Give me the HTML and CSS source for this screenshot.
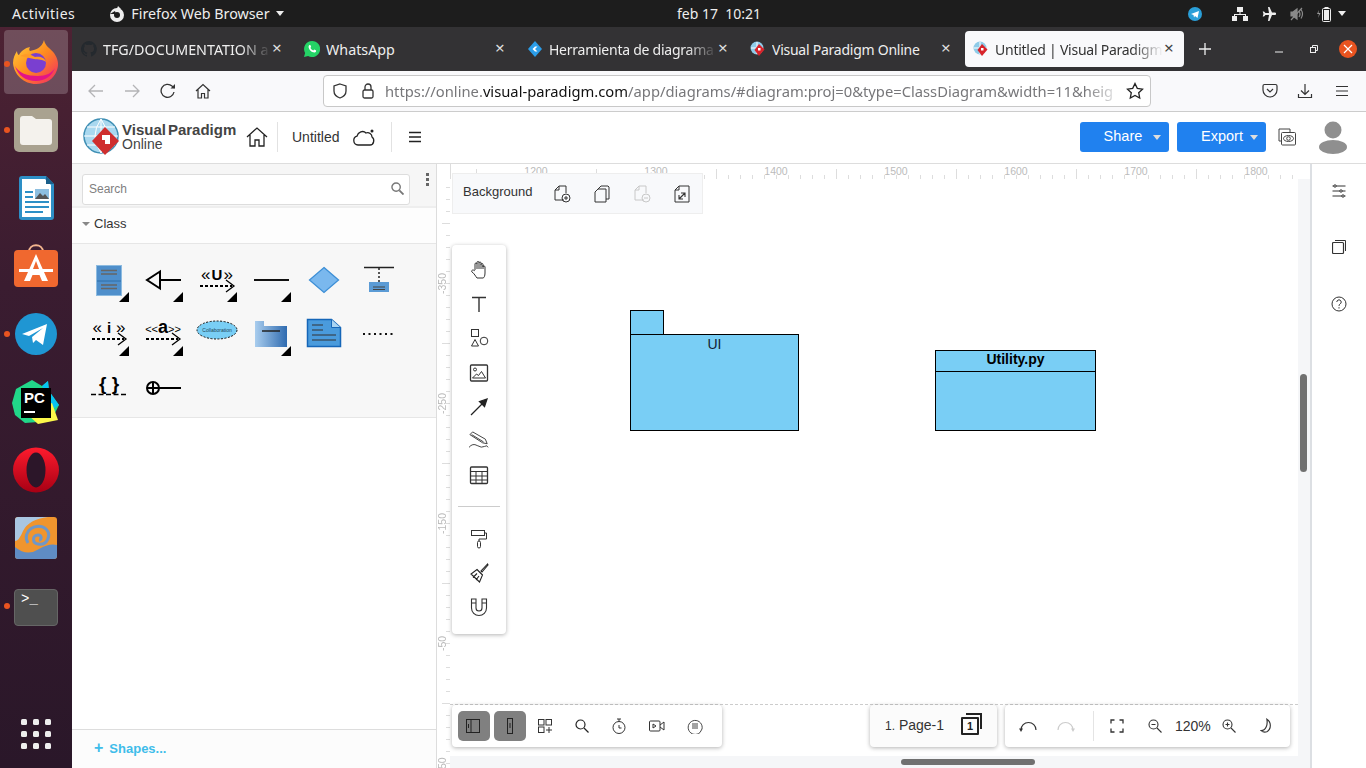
FILE: index.html
```html
<!DOCTYPE html>
<html>
<head>
    <title>Untitled | Visual Paradigm Online</title>
    <link rel="stylesheet" href="styles.css">
</head>
<body>
    <div class="topbar">
        <span class="activities">Activities</span>
        <svg class="app-ico" width="16" height="16" viewBox="0 0 16 16"><circle cx="8" cy="9" r="7" fill="#eee"/><circle cx="8" cy="9" r="3" fill="#1d1d1d"/><path d="M9 0l3 3-5 2z" fill="#eee"/><path d="M1 8l5-3 1 3z" fill="#1d1d1d"/></svg>
        <span class="app-name">Firefox Web Browser</span>
        <span class="caret"></span>
        <span class="clock">feb 17&nbsp; 10:21</span>
        <div class="tray">
            <svg class="tray-tg" width="14" height="14" viewBox="0 0 14 14"><circle cx="7" cy="7" r="7" fill="#2a9fd8"/><path d="M3 7l8-3-1.5 7-2.5-2-1 1.500-.5-2.500z" fill="#fff"/></svg>
            <svg class="tray-net" width="16" height="14" viewBox="0 0 16 14" fill="#eee"><rect x="5" y="0" width="6" height="5"/><rect x="0" y="9" width="5" height="5"/><rect x="11" y="9" width="5" height="5"/><path d="M7.500 5h1v2H14v2h-1V8H3v1H2V7h5.500z"/></svg>
            <svg class="tray-air" width="14" height="14" viewBox="0 0 14 14" fill="#eee"><path d="M6 0h1.500L10 5.500h3a1 1 0 0 1 0 2.500H10L7.500 14H6l1-6H3.500L2 9.500H.7L1.500 7 .7 4.500H2L3.500 6H7z"/></svg>
            <svg class="tray-snd" width="14" height="14" viewBox="0 0 14 14" fill="none" stroke="#8a8a8a" stroke-width="1.200"><path d="M1 5h2l4-3v10l-4-3H1z" fill="#8a8a8a"/><path d="M9 4q2 3 0 6M11 2.500q3 4.500 0 9M1 13L12 1"/></svg>
            <svg class="tray-bat" width="16" height="16" viewBox="0 0 16 16"><path d="M3 4L1 8h2l-1 4 2.500-5h-2z" fill="#999"/><rect x="6.500" y="2.500" width="8" height="13" rx="1" fill="none" stroke="#eee"/><rect x="8" y="4" width="5" height="10" fill="#eee"/><rect x="8.500" y="1" width="4" height="1.500" fill="#eee"/></svg>
            <span class="caret"></span>
        </div>
    </div>

    <div class="desktop">
        <div class="dock">
            <div class="dock-item active running">
                <svg width="46" height="46" viewBox="0 0 46 46"><defs><linearGradient id="ffa" x1="0" y1="0" x2="1" y2="1"><stop offset="0" stop-color="#ffd43a"/><stop offset=".5" stop-color="#ff8a1f"/><stop offset="1" stop-color="#f0246a"/></linearGradient></defs><path d="M31 1c1 6 6 8 10 13 4 6 5 11 3 17-3 9-11 14-21 14C11 45 1 36 0 24c0-5 2-9 4-12 0 2 1 4 2 4 2-4 6-7 11-8-1 2-1 3 0 4 5-1 12-3 14-11z" fill="url(#ffa)"/><path d="M2 27c3 10 11 15 21 15 9 0 16-5 19-13-3 5-9 8-17 8C14 37 6 34 2 27z" fill="#e31587"/><circle cx="23" cy="24" r="10" fill="#7a3fd0"/><path d="M7 17c5-3 11-2 15 1 4-1 10 0 11 5-3-3-8-2-12-3-5-1-9-2-14-3z" fill="#ff9a26"/></svg>
            </div>
            <div class="dock-item running">
                <svg width="46" height="46" viewBox="0 0 46 46"><rect x="1" y="1" width="44" height="44" rx="5" fill="#a9a290"/><path d="M7 12a3 3 0 0 1 3-3h9l4 3h13a3 3 0 0 1 3 3v20a3 3 0 0 1-3 3H10a3 3 0 0 1-3-3z" fill="#f4f2ed"/></svg>
            </div>
            <div class="dock-item">
                <svg width="40" height="46" viewBox="0 0 40 46"><path d="M3 4a3 3 0 0 1 3-3h24l8 8v33a3 3 0 0 1-3 3H6a3 3 0 0 1-3-3z" fill="#2d8fc6"/><path d="M6 4h23l6 6v32H6z" fill="#fff"/><path d="M30 1l8 8h-8z" fill="#1a5f8a"/><path d="M9 16h8v2H9zM9 21h8v2H9zM9 26h24v2H9zM9 31h24v2H9zM9 36h18v2H9z" fill="#2d8fc6"/><rect x="19" y="14" width="14" height="10" fill="#8dbfe0"/><path d="M19 24l5-6 3 3 2-2 4 5z" fill="#555"/></svg>
            </div>
            <div class="dock-item">
                <svg width="46" height="44" viewBox="0 0 46 44"><path d="M16 8c0-9 14-9 14 0" fill="none" stroke="#f3b58e" stroke-width="2"/><rect x="1" y="6" width="44" height="37" rx="4" fill="#f0682f"/><path d="M23 10L11 37h6l2.500-6h7l2.500 6h6z" fill="#fff"/><path d="M6 25h34v3H6z" fill="#fff"/><path d="M23 17l-3 8h6z" fill="#f0682f"/></svg>
            </div>
            <div class="dock-item running">
                <svg width="44" height="44" viewBox="0 0 44 44"><circle cx="22" cy="22" r="21" fill="#1f96d3"/><path d="M8 22L33 12l-4 21-7-5-3 3-1-6 11-9-14 8z" fill="#fff"/></svg>
            </div>
            <div class="dock-item">
                <svg width="48" height="46" viewBox="0 0 48 46"><path d="M4 10L20 1l10 6 6-5 1 10 10 14-8 16-26 2-10-8-3-12z" fill="#21d789"/><path d="M30 7l6-5 1 10 10 14-6 4z" fill="#07c3f2"/><path d="M16 36l24-12 6 17-20 4z" fill="#fcf84a"/><rect x="9" y="9" width="30" height="30" fill="#000"/><text class="pc-text" x="12" y="24">PC</text><rect x="12" y="32" width="11" height="2" fill="#fff"/></svg>
            </div>
            <div class="dock-item">
                <svg width="46" height="46" viewBox="0 0 46 46"><defs><linearGradient id="opa" x1="0" y1="0" x2="0" y2="1"><stop offset="0" stop-color="#ff1b2d"/><stop offset="1" stop-color="#a70014"/></linearGradient></defs><ellipse cx="23" cy="23" rx="23" ry="22.500" fill="url(#opa)"/><ellipse cx="23" cy="23" rx="9.500" ry="17.500" fill="#2c1629"/></svg>
            </div>
            <div class="dock-item">
                <svg width="42" height="42" viewBox="0 0 42 42"><rect width="42" height="42" rx="3" fill="#f0952e"/><path d="M0 30q12 10 24 2 10-6 18-4v11a3 3 0 0 1-3 3H3a3 3 0 0 1-3-3z" fill="#5f8cc4"/><path d="M0 3a3 3 0 0 1 3-3h30Q14 2 8 14 4 24 0 24z" fill="#a9c6e2"/><path d="M13 26C6 14 22 4 31 12c6 6 1 17-8 15-6-1-6-9 0-9 4 0 4 5 1 5" fill="none" stroke="#6f97c8" stroke-width="3"/></svg>
            </div>
            <div class="dock-item running">
                <div class="terminal-ico">&gt;_</div>
            </div>
            <div class="dock-apps">
                <span></span><span></span><span></span><span></span><span></span><span></span><span></span><span></span><span></span>
            </div>
        </div>

        <div class="browser">
            <div class="tabstrip">
                <div class="tab">
                    <svg width="16" height="16" viewBox="0 0 16 16"><path d="M8 0a8 8 0 0 0-2.500 15.600c.4.100.5-.2.500-.4v-1.400c-2.200.5-2.700-1-2.700-1-.4-.9-.9-1.200-.9-1.200-.7-.5.100-.5.100-.5.800.1 1.200.8 1.200.8.700 1.200 1.900.9 2.300.7.100-.5.300-.9.500-1.100-1.800-.2-3.600-.9-3.600-4 0-.9.300-1.600.8-2.100-.1-.2-.4-1 .1-2.100 0 0 .7-.2 2.200.8a7.600 7.600 0 0 1 4 0c1.500-1 2.200-.8 2.200-.8.400 1.100.2 1.900.1 2.100.5.600.8 1.300.8 2.100 0 3.100-1.900 3.700-3.700 3.900.3.300.6.800.6 1.500v2.200c0 .2.100.5.600.4A8 8 0 0 0 8 0z" fill="#24292e"/></svg>
                    <span class="tab-title">TFG/DOCUMENTATION a</span>
                    <span class="tab-close">&times;</span>
                </div>
                <div class="tab">
                    <svg width="16" height="16" viewBox="0 0 16 16"><path d="M8 0a8 8 0 0 0-6.900 12L0 16l4.100-1.100A8 8 0 1 0 8 0z" fill="#25d366"/><path d="M5.500 4c-.8.500-1.200 1.700-.7 3 .7 2 2.400 3.700 4.300 4.300 1.300.4 2.500 0 2.900-.9.200-.5.100-1-.1-1.100l-1.700-.8-.9 1c-1.300-.5-2.300-1.400-2.900-2.700l.8-.8-.7-1.800c-.2-.3-.6-.3-.9-.2z" fill="#fff"/></svg>
                    <span class="tab-title tab-full">WhatsApp</span>
                    <span class="tab-close">&times;</span>
                </div>
                <div class="tab">
                    <svg width="16" height="16" viewBox="0 0 16 16"><path d="M8 0l7 8-7 8-7-8z" fill="#2b9de8"/><path d="M5.500 8L8 5.500h2.500L8 8l2.500 2.500H8z" fill="#fff"/></svg>
                    <span class="tab-title tab-tight">Herramienta de diagrama</span>
                    <span class="tab-close">&times;</span>
                </div>
                <div class="tab">
                    <svg width="16" height="16" viewBox="0 0 16 16"><circle cx="7" cy="7" r="6.500" fill="#8fcbe8"/><path d="M1 7h12M7 1v12" stroke="#fff"/><path d="M9 3l5.500 5.500L9 15 4.500 9z" fill="#d8232a"/><rect x="8" y="7" width="2.500" height="2.500" fill="#fff"/></svg>
                    <span class="tab-title tab-full tab-tight">Visual Paradigm Online</span>
                    <span class="tab-close">&times;</span>
                </div>
                <div class="tab tab-active">
                    <svg width="16" height="16" viewBox="0 0 16 16"><circle cx="7" cy="7" r="6.500" fill="#8fcbe8"/><path d="M1 7h12M7 1v12" stroke="#fff"/><path d="M9 3l5.500 5.500L9 15 4.500 9z" fill="#d8232a"/><rect x="8" y="7" width="2.500" height="2.500" fill="#fff"/></svg>
                    <span class="tab-title tab-tight">Untitled | Visual Paradigm</span>
                    <span class="tab-close">&times;</span>
                </div>
                <svg class="new-tab" width="14" height="14" viewBox="0 0 14 14"><path d="M7 1v12M1 7h12" stroke="#eee" stroke-width="1.300"/></svg>
                <svg class="win-min" width="10" height="10" viewBox="0 0 10 10"><path d="M1 8h8" stroke="#eee"/></svg>
                <svg class="win-max" width="10" height="10" viewBox="0 0 10 10" fill="none" stroke="#eee"><rect x="1.500" y="3.500" width="5" height="5"/><path d="M3.500 3.500v-2h5v5h-2"/></svg>
                <div class="win-close"><svg width="10" height="10" viewBox="0 0 10 10"><path d="M1 1l8 8M9 1l-8 8" stroke="#fff" stroke-width="1.200"/></svg></div>
            </div>

            <div class="navbar">
                <svg class="nav-back" width="16" height="16" viewBox="0 0 16 16" fill="none" stroke="#b4b4b6" stroke-width="1.300"><path d="M15 8H1M7 2L1 8l6 6"/></svg>
                <svg class="nav-fwd" width="16" height="16" viewBox="0 0 16 16" fill="none" stroke="#b4b4b6" stroke-width="1.300"><path d="M1 8h14M9 2l6 6-6 6"/></svg>
                <svg class="nav-reload" width="16" height="16" viewBox="0 0 16 16" fill="none" stroke="#333" stroke-width="1.300"><path d="M14 9a6.500 6.500 0 1 1-2-6l2.500 2"/><path d="M15 1v4.500h-4.500z" fill="#333" stroke="none"/></svg>
                <svg class="nav-home" width="16" height="16" viewBox="0 0 16 16" fill="none" stroke="#333" stroke-width="1.200"><path d="M1 8l7-6.500L15 8M3 6.500V15h3.500v-4.500h3V15H13V6.500"/></svg>
                <div class="urlbar">
                    <svg class="url-shield" width="16" height="16" viewBox="0 0 16 16" fill="none" stroke="#333" stroke-width="1.300"><path d="M8 1l6 2v5c0 4-3 6-6 7-3-1-6-3-6-7V3z"/></svg>
                    <svg class="url-lock" width="14" height="16" viewBox="0 0 14 16" fill="none" stroke="#333" stroke-width="1.300"><rect x="2" y="7" width="10" height="8" rx="1.500"/><path d="M4 7V4a3 3 0 0 1 6 0v3"/></svg>
                    <span class="url-text">https://online.<b>visual-paradigm.com</b>/app/diagrams/#diagram:proj=0&amp;type=ClassDiagram&amp;width=11&amp;heig</span>
                    <svg width="18" height="18" viewBox="0 0 18 18" fill="none" stroke="#222" stroke-width="1.300"><path d="M9 1.500l2.300 4.900 5.200.7-3.800 3.600 1 5.300L9 13.400l-4.700 2.600 1-5.300L1.500 7.100l5.200-.7z"/></svg>
                </div>
                <svg class="nav-pocket" width="16" height="16" viewBox="0 0 16 16" fill="none" stroke="#333" stroke-width="1.200"><path d="M1 3a1.500 1.500 0 0 1 1.500-1.500h11A1.500 1.500 0 0 1 15 3v4a7 7 0 0 1-14 0z"/><path d="M5 6l3 3 3-3"/></svg>
                <svg class="nav-down" width="16" height="16" viewBox="0 0 16 16" fill="none" stroke="#333" stroke-width="1.200"><path d="M8 1v10M4 7.500L8 11.500l4-4M1.500 11v3.500h13V11"/></svg>
                <svg class="nav-menu" width="14" height="12" viewBox="0 0 14 12" stroke="#333" stroke-width="1.200"><path d="M1 1.500h12M1 6h12M1 10.500h12"/></svg>
            </div>

            <div class="app-header">
                <svg class="vp-globe" width="38" height="38" viewBox="0 0 38 38"><circle cx="18" cy="18" r="17" fill="#a9d8ef" stroke="#3f8fb4" stroke-width="1.500"/><path d="M1 18h34M18 1v34M4 9h28M4 27h28M18 1q-12 17 0 34M18 1q12 17 0 34" fill="none" stroke="#fff"/><path d="M22 9l14 14-14 14L9 23z" fill="#cf2e2e"/><path d="M19 17h8v9h-5v-4h-3z" fill="#fff"/></svg>
                <div class="vp-name"><b>Visual</b><b class="vp-second">Paradigm</b><br>Online</div>
                <svg class="hdr-home" width="22" height="20" viewBox="0 0 22 20" fill="none" stroke="#222" stroke-width="1.300"><path d="M1 10l10-9 10 9M4 8v11h5v-6h4v6h5V8"/></svg>
                <span class="hdr-sep"></span>
                <span class="doc-title">Untitled</span>
                <svg class="hdr-cloud" width="24" height="18" viewBox="0 0 24 18" fill="none" stroke="#222" stroke-width="1.300"><path d="M6 17a4.500 4.500 0 0 1-1-8.800C6 4 11 2 14 5c3-1 6 1 6 4 3 2 2 8-2 8z" fill="#fff"/><circle cx="20" cy="3" r="1.500" fill="#222" stroke="none"/></svg>
                <span class="hdr-sep sep2"></span>
                <svg class="hdr-menu" width="14" height="12" viewBox="0 0 14 12" stroke="#222" stroke-width="1.300"><path d="M1 1.500h12M1 6h12M1 10.500h12"/></svg>
                <button class="btn-blue btn-share">Share<i class="btn-caret"></i></button>
                <button class="btn-blue btn-export">Export<i class="btn-caret"></i></button>
                <svg class="hdr-view" width="18" height="18" viewBox="0 0 18 18" fill="none" stroke="#444"><path d="M3 13H1V1h11v3"/><rect x="3.500" y="4.500" width="14" height="12.500" rx="1"/><ellipse cx="10.500" cy="10.500" rx="5" ry="3"/><circle cx="10.500" cy="10.500" r="1.800"/></svg>
                <svg class="hdr-user" width="30" height="33" viewBox="0 0 30 33" fill="#8f8f8f"><circle cx="15" cy="9" r="8.500"/><ellipse cx="15" cy="26" rx="14" ry="7"/></svg>
            </div>

            <div class="workspace">
                <div class="sidebar">
                    <div class="search-row">
                        <div class="search-box">
                            <span>Search</span>
                            <svg width="13" height="13" viewBox="0 0 14 14" fill="none" stroke="#777" stroke-width="1.500"><circle cx="5.500" cy="5.500" r="4.500"/><path d="M9 9l4.500 4.500" stroke-width="2"/></svg>
                        </div>
                        <div class="kebab"><span></span><span></span><span></span></div>
                    </div>
                    <div class="group-title"><i class="group-caret"></i>Class</div>
                    <div class="shape-grid">
                        <div class="shape has-more"><svg viewBox="0 0 54 54"><rect x="14.500" y="12.500" width="25" height="30" fill="#4f8fcb" stroke="#8dbbe0"/><path d="M15 28h24" stroke="#2f6ea8"/><path d="M19 17.500h16M19 21h16M19 32h16M19 35.500h16" stroke="#666" stroke-width="1.500"/></svg></div>
                        <div class="shape has-more"><svg viewBox="0 0 54 54" fill="none" stroke="#000" stroke-width="2"><path d="M24 27h21M24 18.500L11 27l13 8.500z"/></svg></div>
                        <div class="shape has-more"><svg viewBox="0 0 54 54"><text class="st-tiny" x="27" y="27">«<tspan class="st-big" dx="1">U</tspan><tspan dx="1">»</tspan></text><path d="M10 33h32" stroke="#000" stroke-width="2" stroke-dasharray="3 2"/><path d="M36 27l8 6-8 6" fill="none" stroke="#000" stroke-width="1.300"/></svg></div>
                        <div class="shape has-more"><svg viewBox="0 0 54 54"><path d="M10 27h35" stroke="#111" stroke-width="2"/></svg></div>
                        <div class="shape"><svg viewBox="0 0 54 54"><path d="M26 14.500L40.500 27 26 39.500 11.500 27z" fill="#7ab8ee" stroke="#3d8fd6" stroke-width="1.300"/></svg></div>
                        <div class="shape"><svg viewBox="0 0 54 54"><path d="M12 14.500h30" stroke="#222" stroke-width="1.500"/><path d="M27 15v14" stroke="#222" stroke-width="1.500" stroke-dasharray="2 2"/><rect x="17" y="29" width="20" height="10" fill="#5b9bd5"/><path d="M21 34h12M21 36.500h12" stroke="#444"/></svg></div>

                        <div class="shape has-more"><svg viewBox="0 0 54 54"><text class="st-tiny" x="27" y="26">«<tspan class="st-big" dx="5">i</tspan><tspan dx="5">»</tspan></text><path d="M10 32h32" stroke="#000" stroke-width="2" stroke-dasharray="3 2"/><path d="M36 26l8 6-8 6" fill="none" stroke="#000" stroke-width="1.300"/></svg></div>
                        <div class="shape has-more"><svg viewBox="0 0 54 54"><text class="st-small" x="27" y="26">&lt;&lt;<tspan class="st-big st-a">a</tspan>&gt;&gt;</text><path d="M10 32h32" stroke="#000" stroke-width="2" stroke-dasharray="3 2"/><path d="M36 26l8 6-8 6" fill="none" stroke="#000" stroke-width="1.300"/></svg></div>
                        <div class="shape"><svg viewBox="0 0 54 54"><ellipse cx="27" cy="23" rx="20" ry="9" fill="#79cef5" stroke="#111" stroke-dasharray="2 1.500"/><text class="st-collab" x="27" y="24.500">Collaboration</text></svg></div>
                        <div class="shape has-more"><svg viewBox="0 0 54 54"><defs><linearGradient id="pkg"><stop offset="0" stop-color="#a9cdee"/><stop offset="1" stop-color="#2f6bb0"/></linearGradient></defs><path d="M11 14h9v5h23v21H11z" fill="url(#pkg)"/><path d="M18 24h18" stroke="#222" stroke-width="1.500"/></svg></div>
                        <div class="shape"><svg viewBox="0 0 54 54"><path d="M9.500 12.500h24l9 8v19h-33z" fill="#4a9bdc" stroke="#1566b8" stroke-width="1.500"/><path d="M33.500 12.500v8h9" fill="#a9d4f2" stroke="#1566b8"/><path d="M14 18h11M14 23h11M14 28h24M14 33h24" stroke="#333" stroke-width="1.200"/></svg></div>
                        <div class="shape"><svg viewBox="0 0 54 54"><path d="M11 27h32" stroke="#111" stroke-width="2" stroke-dasharray="2 3.500"/></svg></div>

                        <div class="shape"><svg viewBox="0 0 54 54"><text class="st-brace" x="27" y="29">{ }</text><path d="M9 33.500h36" stroke="#000" stroke-width="1.500" stroke-dasharray="5 2.500"/></svg></div>
                        <div class="shape"><svg viewBox="0 0 54 54" fill="none" stroke="#000" stroke-width="2"><circle cx="17" cy="27" r="6"/><path d="M11 27h34M17 21v12"/></svg></div>
                    </div>
                    <div class="sidebar-fill"></div>
                    <div class="sidebar-foot"><b>+</b>Shapes...</div>
                </div>

                <div class="canvas">
                    <div class="ruler-top">
                        <span>1200</span><span>1300</span><span>1400</span><span>1500</span><span>1600</span><span>1700</span><span>1800</span>
                    </div>
                    <div class="ruler-left">
                        <span>-350</span><span>-250</span><span>-150</span><span>-50</span><span>50</span>
                    </div>
                    <div class="gutter-right"></div>
                    <div class="gutter-bottom"></div>
                    <div class="page-edge"></div>

                    <div class="uml-pkg-tab"></div>
                    <div class="uml-pkg">UI</div>
                    <div class="uml-class">
                        <div class="uml-class-name">Utility.py</div>
                    </div>

                    <div class="bg-bar">
                        <span class="bg-label">Background</span>
                        <svg width="18" height="18" viewBox="0 0 18 18" fill="none" stroke="#333"><path d="M11 15H2V5l4-4h7v7"/><path d="M6 1v4H2"/><circle cx="13" cy="13" r="4"/><path d="M13 11v4M11 13h4"/></svg>
                        <svg width="18" height="18" viewBox="0 0 18 18" fill="none" stroke="#333"><path d="M5 4l3-3h7l1 1v12h-3"/><path d="M2 7l3-3h8v13H2z"/></svg>
                        <svg width="18" height="18" viewBox="0 0 18 18" fill="none" stroke="#c8c8c8"><path d="M11 15H2V5l4-4h7v7"/><path d="M6 1v4H2"/><circle cx="13" cy="13" r="4"/><path d="M11 13h4"/></svg>
                        <svg width="18" height="18" viewBox="0 0 18 18" fill="none" stroke="#333"><path d="M2 17V5l4-4h10v16z"/><path d="M6 1v4H2"/><path d="M6 14l6-6M12 12V8H8M6 10v4h4" stroke-width="1.100"/></svg>
                    </div>

                    <div class="tools">
                        <svg width="20" height="20" viewBox="0 0 20 20" fill="none" stroke="#333"><path d="M6 10V4a1 1 0 0 1 2 0V2.500a1 1 0 0 1 2 0V3a1 1 0 0 1 2 0v1.500a1 1 0 0 1 2 0V7a1 1 0 0 1 2 0v6c0 3-1 5-2 5H8c-1-1-3-5-5-6-1-1 0-2 1-2 1 0 2 1 2 1"/><path d="M8 4v5M10 3v6M12 4v5M14 5v4"/></svg>
                        <svg width="20" height="20" viewBox="0 0 20 20" fill="none" stroke="#333" stroke-width="1.400"><path d="M3 3.500h14M10 3.500V18"/></svg>
                        <svg width="20" height="20" viewBox="0 0 20 20" fill="none" stroke="#333"><rect x="2.500" y="1.500" width="7" height="7"/><path d="M6 11.500l3.500 6.500h-7z"/><circle cx="15" cy="13" r="3.800"/></svg>
                        <svg width="20" height="20" viewBox="0 0 20 20" fill="none" stroke="#333"><rect x="1.500" y="2" width="17" height="16" rx="1" stroke-width="1.300"/><circle cx="6" cy="6.500" r="1.500"/><path d="M3.500 15l4-4 2 1.500 3-4 4 6.500z"/></svg>
                        <svg width="20" height="20" viewBox="0 0 20 20" fill="none" stroke="#222" stroke-width="1.300"><path d="M2 18L14 6"/><path d="M10.500 4.500L18 2l-2.500 7.500z" fill="#222"/></svg>
                        <svg width="24" height="20" viewBox="0 0 24 22" fill="none" stroke="#333"><path d="M5 1L2 4l14 9 5 1-2-5zM4 4l13 8"/><path d="M1 18q4-5 9-2t8 1 4 1"/></svg>
                        <svg width="20" height="20" viewBox="0 0 20 20" fill="none" stroke="#333"><rect x="1.500" y="2" width="17" height="16.500" rx="1" stroke-width="1.300"/><path d="M1.500 6.500h17M1.500 11h17M1.500 15h17M7 6.500v12M13 6.500v12"/></svg>
                        <span class="tools-sep"></span>
                        <svg width="20" height="20" viewBox="0 0 20 20" fill="none" stroke="#333"><rect x="2.500" y="1.500" width="13" height="5"/><path d="M15.500 4h2v6h-7.500v2"/><rect x="8.500" y="12" width="3" height="7" rx="1.500"/></svg>
                        <svg width="20" height="20" viewBox="0 0 20 20" fill="none" stroke="#222" stroke-width="1.100"><path d="M18.500 1L12 8l1 1 6-7zM8 6.500l5.500 5.500-3 7L2 11zM4 14.500l4-4M7 17l3-4"/></svg>
                        <svg width="20" height="20" viewBox="0 0 20 20" fill="none" stroke="#333" stroke-width="1.100"><path d="M2.500 2H7v9a3 3 0 0 0 6 0V2h4.500v9a7.500 7.500 0 0 1-15 0zM2.500 6H7M13 6h4.500"/></svg>
                    </div>

                    <div class="bottom-bar">
                        <div class="panel panel-left">
                            <span class="toggle"><svg width="16" height="14" viewBox="0 0 16 14" fill="none" stroke="#222"><rect x=".5" y=".5" width="13" height="13"/><path d="M5 .5v13M2.500 5v4" /></svg></span>
                            <span class="toggle"><svg width="8" height="16" viewBox="0 0 8 16" fill="none" stroke="#222"><rect x="1.500" y=".5" width="5" height="15"/><path d="M4 5v5"/></svg></span>
                            <svg class="pl-ico first" width="16" height="16" viewBox="0 0 16 16" fill="none" stroke="#333"><rect x="1.500" y="1.500" width="5.500" height="5.500"/><rect x="9" y="1.500" width="5.500" height="5.500"/><rect x="1.500" y="9" width="5.500" height="5.500"/><path d="M12 9v6M9 12h6"/></svg>
                            <svg class="pl-ico" width="14" height="14" viewBox="0 0 14 14" fill="none" stroke="#222" stroke-width="1.200"><circle cx="5.500" cy="5.500" r="4.500"/><path d="M9 9l4.500 4.500"/></svg>
                            <svg class="pl-ico wide" width="14" height="16" viewBox="0 0 14 16" fill="none" stroke="#333"><circle cx="7" cy="9.500" r="6"/><path d="M5 1h4M7 1v2.500M7 7v3h2.500"/></svg>
                            <svg class="pl-ico wide" width="16" height="14" viewBox="0 0 16 14" fill="none" stroke="#333"><rect x=".5" y="2" width="10.500" height="10" rx="1"/><path d="M11 6l4-3v8l-4-3M4 5l3 2-3 2z"/></svg>
                            <svg class="pl-ico" width="16" height="16" viewBox="0 0 16 16" fill="none" stroke="#333" stroke-width=".9"><path d="M13 14.500a7 7 0 1 1 2-3.500zM5 6h6M5 8h6M5 10h6"/></svg>
                        </div>
                        <div class="panel panel-page">
                            <span class="page-name"><small>1.</small> Page-1</span>
                            <div class="page-count"><span>1</span></div>
                        </div>
                        <div class="panel panel-view">
                            <svg class="v-undo" width="18" height="14" viewBox="0 0 18 14" fill="none" stroke="#333" stroke-width="1.200"><path d="M2 11a7.500 7.500 0 0 1 15 0"/><path d="M0 9.500h4L2 13z" fill="#333" stroke="none"/></svg>
                            <svg class="v-redo" width="18" height="14" viewBox="0 0 18 14" fill="none" stroke="#ccc" stroke-width="1.200"><path d="M1 11a7.500 7.500 0 0 1 15 0"/><path d="M14 9.500h4L16 13z" fill="#ccc" stroke="none"/></svg>
                            <span class="v-sep"></span>
                            <svg class="v-full" width="14" height="14" viewBox="0 0 14 14" fill="none" stroke="#333" stroke-width="1.300"><path d="M1 4.500V1h3.500M9.500 1H13v3.500M13 9.500V13H9.500M4.500 13H1V9.500"/></svg>
                            <svg class="v-zout" width="14" height="14" viewBox="0 0 14 14" fill="none" stroke="#333" stroke-width="1.100"><circle cx="5.500" cy="5.500" r="4.500"/><path d="M9 9l4.500 4.500M3.500 5.500h4"/></svg>
                            <span class="zoom-val">120%</span>
                            <svg class="v-zin" width="14" height="14" viewBox="0 0 14 14" fill="none" stroke="#333" stroke-width="1.100"><circle cx="5.500" cy="5.500" r="4.500"/><path d="M9 9l4.500 4.500M3.500 5.500h4M5.500 3.500v4"/></svg>
                            <svg class="v-moon" width="16" height="16" viewBox="0 0 14 14" fill="none" stroke="#333"><path d="M6 1a6.500 6.500 0 0 1 0 11 5 5 0 0 1-5-1c4 0 6-5 5-10z"/></svg>
                        </div>
                    </div>

                    <div class="scroll-v"></div>
                    <div class="scroll-h"></div>
                </div>

                <div class="rightbar">
                    <svg width="14" height="14" viewBox="0 0 14 14" fill="none" stroke="#333"><path d="M4 2h9.500M.5 2H2M.5 7H8M10 7h3.500M.5 12H10M12 12h1.500"/><circle cx="3" cy="2" r="1.200"/><circle cx="9" cy="7" r="1.200"/><circle cx="11" cy="12" r="1.200"/></svg>
                    <svg width="14" height="14" viewBox="0 0 14 14" fill="none" stroke="#333"><rect x=".5" y="2.500" width="11" height="11" rx="1" stroke-width="1.200"/><path d="M3 .5h10.500V11"/></svg>
                    <svg width="16" height="16" viewBox="0 0 16 16" fill="none" stroke="#333"><circle cx="8" cy="8" r="7"/><path d="M5.800 6a2.200 2.200 0 1 1 3.400 1.900c-.8.500-1.200 1-1.200 2M8 11.200v1.300"/></svg>
                </div>
            </div>
        </div>
    </div>
</body>
</html>
```

FILE: styles.css
```css
html, body {
    margin: 0;
    width: 1366px;
    height: 768px;
    overflow: hidden;
}
body {
    display: flex;
    flex-direction: column;
    font-family: "Liberation Sans", Arial, sans-serif;
    background-color: #fff;
    color: #333;
}
svg {
    flex: none;
    display: block;
}

/* ubuntu top bar */
.topbar {
    height: 27px;
    flex: none;
    display: flex;
    align-items: center;
    background-color: #1d1d1d;
    color: #eee;
    font-family: "Noto Sans", sans-serif;
    font-size: 14px;
}
.activities {
    margin-left: 12px;
    letter-spacing: 0.5px;
}
.app-ico {
    margin-left: 34px;
}
.app-name {
    margin-left: 6px;
    font-size: 14.3px;
}
.caret {
    width: 0;
    height: 0;
    margin-left: 6px;
    border-left: 4.5px solid transparent;
    border-right: 4.5px solid transparent;
    border-top: 5px solid #eee;
}
.clock {
    position: absolute;
    left: 677px;
    top: 4px;
    font-size: 14px;
}
.tray {
    margin-left: auto;
    margin-right: 20px;
    display: flex;
    align-items: center;
}
.tray-net {
    margin-left: 30px;
}
.tray-air {
    margin-left: 14px;
}
.tray-snd {
    margin-left: 14px;
}
.tray-bat {
    margin-left: 12px;
}

.desktop {
    flex: 1;
    display: flex;
    min-height: 0;
}

/* launcher */
.dock {
    width: 72px;
    flex: none;
    padding-top: 1px;
    box-sizing: border-box;
    display: flex;
    flex-direction: column;
    align-items: center;
    background: linear-gradient(#4d2233, #3a1c30 35%, #2a1729);
}
.dock-item {
    position: relative;
    width: 64px;
    height: 68px;
    flex: none;
    display: flex;
    align-items: center;
    justify-content: center;
}
.dock-item.active {
    height: 64px;
    margin: 2px 0;
    border-radius: 4px;
    background-color: rgba(255, 255, 255, 0.2);
}
.dock-item.running::before {
    content: "";
    position: absolute;
    left: 0;
    top: 31px;
    width: 6px;
    height: 6px;
    border-radius: 50%;
    background-color: #e95420;
}
.pc-text {
    font-family: "Liberation Sans", sans-serif;
    font-weight: bold;
    font-size: 15px;
    fill: #fff;
}
.terminal-ico {
    width: 44px;
    height: 37px;
    margin-top: 2px;
    padding: 2px 6px;
    box-sizing: border-box;
    border-radius: 4px;
    background-color: #4f4f4f;
    border: 1px solid #666;
    color: #fff;
    font-family: "Liberation Mono", monospace;
    font-size: 14px;
    line-height: 14px;
}
.dock-apps {
    margin-top: auto;
    margin-bottom: 19px;
    display: grid;
    grid-template-columns: repeat(3, 6px);
    gap: 6px;
}
.dock-apps span {
    width: 6px;
    height: 6px;
    border-radius: 1.5px;
    background-color: #eee;
}

.browser {
    flex: 1;
    min-width: 0;
    display: flex;
    flex-direction: column;
}

/* firefox tabs */
.tabstrip {
    height: 44px;
    flex: none;
    display: flex;
    align-items: center;
    box-sizing: border-box;
    background-color: #333234;
    font-family: "Noto Sans", sans-serif;
    font-size: 14.3px;
    color: #eee;
}
.tab {
    position: relative;
    width: 219px;
    height: 36px;
    margin: 0 3px 0 1px;
    flex: none;
    display: flex;
    align-items: center;
    padding-left: 8px;
    box-sizing: border-box;
    border-radius: 4px;
}
.tab-title {
    margin-left: 6px;
    width: 168px;
    overflow: hidden;
    white-space: nowrap;
    -webkit-mask-image: linear-gradient(to right, #000 82%, transparent);
    mask-image: linear-gradient(to right, #000 82%, transparent);
}
.tab-tight {
    font-size: 14px;
    letter-spacing: -0.25px;
}
.tab-full {
    -webkit-mask-image: none;
    mask-image: none;
}
.tab-close {
    position: absolute;
    left: 199px;
    top: 7px;
    font-size: 17px;
    line-height: 20px;
    color: #ddd;
}
.tab-active {
    background-color: #f9f9fb;
    color: #333;
}
.tab-active .tab-close {
    color: #444;
}
.new-tab {
    margin-left: 11px;
}
.win-min {
    margin-left: 62px;
}
.win-max {
    margin-left: 25px;
}
.win-close {
    margin-left: 20px;
    width: 18px;
    height: 18px;
    border-radius: 50%;
    background-color: #e95420;
    display: flex;
    align-items: center;
    justify-content: center;
}

/* firefox toolbar */
.navbar {
    height: 41px;
    flex: none;
    display: flex;
    align-items: center;
    box-sizing: border-box;
    border-bottom: 1px solid #ccc;
    background-color: #f9f9fb;
}
.nav-back {
    margin-left: 16px;
}
.nav-fwd {
    margin-left: 20px;
}
.nav-reload {
    margin-left: 20px;
}
.nav-home {
    margin-left: 19px;
}
.urlbar {
    margin-left: 112px;
    width: 828px;
    height: 32px;
    flex: none;
    display: flex;
    align-items: center;
    padding: 0 6px 0 8px;
    box-sizing: border-box;
    border: 1px solid #c8c8c8;
    border-radius: 4px;
    background-color: #fff;
}
.url-lock {
    margin-left: 13px;
}
.url-text {
    flex: 1;
    min-width: 0;
    margin: 0 4px 0 10px;
    overflow: hidden;
    white-space: nowrap;
    font-family: "Noto Sans", sans-serif;
    font-size: 14.75px;
    color: #77777a;
    -webkit-mask-image: linear-gradient(to right, #000 95%, transparent);
    mask-image: linear-gradient(to right, #000 95%, transparent);
}
.url-text b {
    font-weight: normal;
    color: #111;
}
.nav-pocket {
    margin-left: 111px;
}
.nav-down {
    margin-left: 19px;
}
.nav-menu {
    margin-left: 22px;
}

/* vp header */
.app-header {
    height: 52px;
    flex: none;
    display: flex;
    align-items: center;
    padding-bottom: 1px;
    box-sizing: border-box;
    border-bottom: 1px solid #ddd;
    background-color: #fff;
}
.vp-globe {
    margin-left: 11px;
}
.vp-name {
    margin: 0 0 1px 1px;
    width: 124px;
    font-size: 14px;
    line-height: 14px;
    color: #444;
}
.vp-name b {
    font-size: 15px;
}
.vp-second {
    margin-left: 2px;
}
.hdr-home {
    margin-left: 0;
}
.hdr-sep {
    width: 1px;
    height: 30px;
    margin-left: 9px;
    background-color: #e2e2e2;
}
.doc-title {
    margin: 0 0 1px 14px;
    font-size: 14px;
    color: #333;
}
.hdr-cloud {
    margin-left: 13px;
}
.sep2 {
    margin-left: 15px;
}
.hdr-menu {
    margin-left: 16px;
}
.btn-blue {
    position: relative;
    width: 89px;
    height: 30px;
    padding: 0 0 2px 0;
    border: none;
    border-radius: 3px;
    background-color: #2081ef;
    color: #fff;
    font-family: "Liberation Sans", sans-serif;
    font-size: 14.5px;
}
.btn-caret {
    position: absolute;
    right: 8px;
    top: 13px;
    width: 0;
    height: 0;
    border-left: 4px solid transparent;
    border-right: 4px solid transparent;
    border-top: 5px solid #ddd;
}
.btn-share {
    margin-left: 658px;
    padding-right: 4px;
}
.btn-export {
    margin-left: 8px;
}
.hdr-view {
    margin-left: 12px;
}
.hdr-user {
    margin-left: 22px;
}

.workspace {
    flex: 1;
    min-height: 0;
    display: flex;
}

/* shape panel */
.sidebar {
    width: 365px;
    flex: none;
    display: flex;
    flex-direction: column;
    box-sizing: border-box;
    border-right: 1px solid #ddd;
    background-color: #fff;
}
.search-row {
    height: 44px;
    flex: none;
    position: relative;
    display: flex;
    padding: 10px 0 0 10px;
    box-sizing: border-box;
    background-color: #f6f6f6;
    border-bottom: 2px solid #eee;
}
.search-box {
    width: 328px;
    height: 31px;
    display: flex;
    align-items: center;
    justify-content: space-between;
    padding: 0 5px 2px 6px;
    box-sizing: border-box;
    border: 1px solid #ddd;
    border-radius: 3px;
    background-color: #fff;
    font-size: 12px;
    color: #808080;
}
.kebab {
    margin: -1px 0 0 16px;
    display: flex;
    flex-direction: column;
    gap: 2px;
}
.kebab span {
    width: 3px;
    height: 3px;
    background-color: #666;
}
.group-title {
    height: 35px;
    flex: none;
    display: flex;
    align-items: center;
    padding: 0 0 5px 10px;
    box-sizing: border-box;
    font-size: 13px;
    background-color: #fdfdfd;
    color: #333;
}
.group-caret {
    width: 0;
    height: 0;
    margin: 2px 4px 0 0;
    border-left: 4px solid transparent;
    border-right: 4px solid transparent;
    border-top: 4px solid #888;
}
.shape-grid {
    height: 175px;
    flex: none;
    display: grid;
    grid-template-columns: repeat(6, 54px);
    grid-auto-rows: 54px;
    padding: 9px 0 0 10px;
    box-sizing: border-box;
    border-top: 1px solid #e6e6e6;
    border-bottom: 1px solid #e6e6e6;
    background-color: #f7f7f7;
}
.shape {
    position: relative;
}
.has-more::after {
    content: "";
    position: absolute;
    left: 37px;
    top: 39px;
    width: 0;
    height: 0;
    border-left: 10px solid transparent;
    border-bottom: 10px solid #000;
}
.st-tiny {
    font-family: "Liberation Sans", sans-serif;
    font-size: 17px;
    text-anchor: middle;
}
.st-small {
    font-family: "Liberation Sans", sans-serif;
    font-size: 11px;
    text-anchor: middle;
}
.st-big {
    font-size: 15px;
    font-weight: bold;
}
.st-a {
    font-size: 18px;
}
.st-collab {
    font-family: "Liberation Sans", sans-serif;
    font-size: 5px;
    text-anchor: middle;
    fill: #245;
}
.st-brace {
    font-family: "Liberation Sans", sans-serif;
    font-size: 19px;
    font-weight: bold;
    text-anchor: middle;
}
.sidebar-fill {
    flex: 1;
}
.sidebar-foot {
    height: 39px;
    flex: none;
    display: flex;
    align-items: center;
    padding: 0 0 2px 22px;
    box-sizing: border-box;
    border-top: 1px solid #ddd;
    background-color: #fcfcfc;
    color: #3fbdea;
    font-size: 13px;
    font-weight: bold;
}
.sidebar-foot b {
    margin-right: 6px;
    font-size: 16px;
}

/* canvas */
.canvas {
    position: relative;
    flex: 1;
    min-width: 0;
    background-color: #fff;
    overflow: hidden;
    border-right: 2px solid #dcdfe3;
}
.ruler-top {
    position: absolute;
    left: 13px;
    right: 12px;
    top: 0;
    height: 15px;
    display: flex;
    padding-left: 25px;
    box-sizing: border-box;
    background-image:
        linear-gradient(to right, #ddd 1px, transparent 1px),
        linear-gradient(to right, #ddd 1px, transparent 1px);
    background-size: 120px 10px, 12px 4px;
    background-position: 25px bottom, 25px bottom;
    background-repeat: repeat-x;
    border-left: 1px solid #ddd;
    font-size: 10.5px;
    line-height: 15px;
    color: #bbb;
}
.ruler-top span {
    width: 120px;
    flex: none;
    text-align: center;
}
.ruler-left {
    position: absolute;
    left: 0;
    top: 14px;
    bottom: 0;
    width: 13px;
    display: flex;
    flex-direction: column;
    padding-top: 45px;
    box-sizing: border-box;
    background-image:
        linear-gradient(#ddd 1px, transparent 1px),
        linear-gradient(#ddd 1px, transparent 1px);
    background-size: 8px 120px, 4px 12px;
    background-position: right 165px, right 165px;
    background-repeat: repeat-y;
    font-size: 10.5px;
    color: #bbb;
}
.ruler-left span {
    height: 120px;
    flex: none;
    writing-mode: vertical-rl;
    transform: rotate(180deg);
    text-align: center;
    line-height: 10px;
}
.gutter-right {
    position: absolute;
    right: 0;
    top: 15px;
    bottom: 0;
    width: 12px;
    background-color: #f5f6f8;
}
.gutter-bottom {
    position: absolute;
    left: 13px;
    right: 0;
    bottom: 0;
    height: 12px;
    background-color: #f5f6f8;
}
.page-edge {
    position: absolute;
    left: 13px;
    right: 12px;
    top: 540px;
    border-top: 1px dashed #ccc;
}
.uml-pkg-tab {
    position: absolute;
    left: 193px;
    top: 146px;
    width: 34px;
    height: 25px;
    box-sizing: border-box;
    border: 1px solid #000;
    background-color: #79cef5;
}
.uml-pkg {
    position: absolute;
    left: 193px;
    top: 170px;
    width: 169px;
    height: 97px;
    box-sizing: border-box;
    border: 1px solid #000;
    background-color: #79cef5;
    color: #123;
    font-size: 14px;
    line-height: 19px;
    text-align: center;
}
.uml-class {
    position: absolute;
    left: 498px;
    top: 186px;
    width: 161px;
    height: 81px;
    box-sizing: border-box;
    border: 1px solid #000;
    background-color: #79cef5;
}
.uml-class-name {
    height: 21px;
    box-sizing: border-box;
    border-bottom: 1px solid #000;
    color: #000;
    font-size: 14px;
    font-weight: bold;
    line-height: 16px;
    text-align: center;
}
.bg-bar {
    position: absolute;
    left: 15px;
    top: 9px;
    width: 251px;
    height: 41px;
    display: flex;
    align-items: center;
    gap: 22px;
    box-sizing: border-box;
    border: 1px solid #eee;
    background-color: #f8f9fb;
    font-size: 13px;
    color: #333;
}
.bg-label {
    margin: 0 -2px 4px 10px;
    width: 70px;
    white-space: nowrap;
}
.tools {
    position: absolute;
    left: 15px;
    top: 81px;
    width: 54px;
    height: 389px;
    padding-top: 15px;
    box-sizing: border-box;
    display: flex;
    flex-direction: column;
    align-items: center;
    gap: 14.2px;
    border-radius: 4px;
    background-color: #fff;
    box-shadow: 0 1px 4px rgba(0, 0, 0, 0.3);
}
.tools-sep {
    width: 42px;
    height: 1px;
    margin: 7px 0;
    background-color: #ccc;
}
.bottom-bar {
    position: absolute;
    left: 15px;
    right: 20px;
    top: 541px;
    height: 42px;
    display: flex;
    gap: 8px;
}
.panel {
    display: flex;
    align-items: center;
    box-sizing: border-box;
    border-radius: 4px;
    background-color: #fff;
    box-shadow: 0 1px 4px rgba(0, 0, 0, 0.3);
}
.panel-left {
    width: 270px;
    padding-left: 6px;
    gap: 4px;
}
.toggle {
    width: 32px;
    height: 30px;
    display: flex;
    align-items: center;
    justify-content: center;
    border-radius: 5px;
    background-color: #808080;
}
.pl-ico {
    margin-left: 18px;
}
.pl-ico.first {
    margin-left: 7px;
}
.pl-ico.wide {
    margin-left: 19px;
}
.panel-page {
    width: 127px;
    margin-left: auto;
    padding-left: 15px;
    background-color: #fbfbfb;
    font-size: 14px;
}
.page-name {
    margin-bottom: 2px;
}
.page-name small {
    font-size: 12px;
}
.page-count {
    position: relative;
    margin-left: 17px;
    width: 14px;
    height: 14px;
    display: flex;
    align-items: center;
    justify-content: center;
    border: 2px solid #222;
    border-radius: 1px;
    background-color: #fbfbfb;
    font-size: 11px;
    font-weight: bold;
    color: #222;
}
.page-count::before {
    content: "";
    position: absolute;
    left: 3px;
    top: -6px;
    width: 16px;
    height: 16px;
    box-sizing: border-box;
    border-top: 2px solid #222;
    border-right: 2px solid #222;
}
.panel-view {
    width: 285px;
    padding-left: 14px;
}
.v-redo {
    margin-left: 20px;
}
.v-sep {
    width: 1px;
    height: 30px;
    margin-left: 18px;
    background-color: #e4e4e4;
}
.v-full {
    margin-left: 16px;
}
.v-zout {
    margin-left: 24px;
}
.zoom-val {
    margin-left: 13px;
    width: 47px;
    font-size: 14px;
}
.v-zin {
    margin-left: 0;
}
.v-moon {
    margin-left: 24px;
}
.scroll-v {
    position: absolute;
    right: 3px;
    top: 210px;
    width: 7px;
    height: 98px;
    border-radius: 4px;
    background-color: #707070;
}
.scroll-h {
    position: absolute;
    left: 464px;
    bottom: 3px;
    width: 134px;
    height: 6px;
    border-radius: 3px;
    background-color: #707070;
}

.rightbar {
    width: 54px;
    flex: none;
    padding-top: 20px;
    box-sizing: border-box;
    display: flex;
    flex-direction: column;
    align-items: center;
    gap: 42px;
    background-color: #fff;
}
```
